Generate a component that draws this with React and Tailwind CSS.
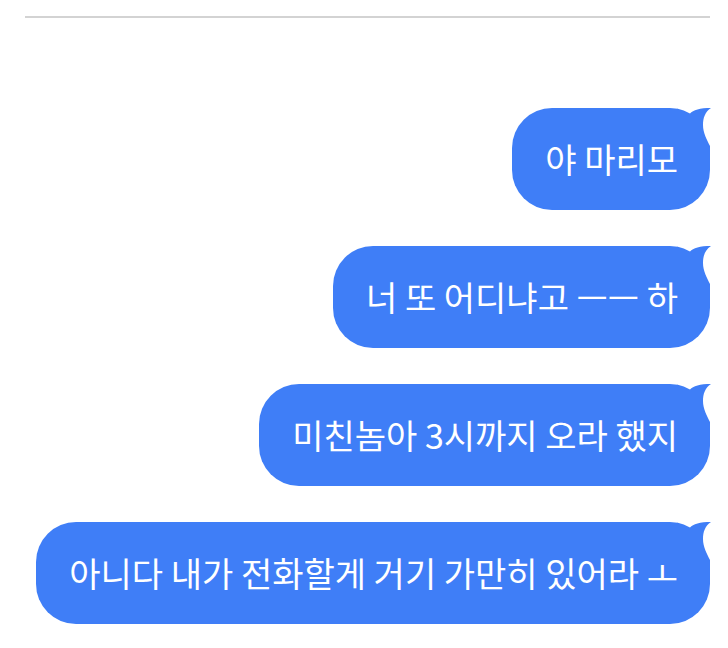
import React from 'react';

const messages = [
  '야 마리모',
  '너 또 어디냐고 ㅡㅡ 하',
  '미친놈아 3시까지 오라 했지',
  '아니다 내가 전화할게 거기 가만히 있어라 ㅗ',
];

// little hooked tail on the top-right corner of a bubble
const Tail = () => (
  <svg
    className="absolute top-0 right-[-1px]"
    width="34"
    height="44"
    viewBox="0 0 34 44"
  >
    <rect width="34" height="44" fill="#fff" />
    <path
      d="M0 0.6 A40 40 0 0 1 13 5.6 C16 2 23 0 34 0 C28 4 26 10 26 17 C26 25 30 32 33 38 L33 44 L0 44 Z"
      fill="#3f7ef7"
    />
  </svg>
);

const Bubble = ({ text }) => (
  <div className="relative rounded-[40px] bg-[#3f7ef7] pl-[33px] pr-[32px] py-[31px] text-[34px] leading-[40px] text-white whitespace-nowrap">
    <Tail />
    <span className="relative">{text}</span>
  </div>
);

export default function App() {
  return (
    <div
      className="min-h-[648px] bg-white"
      style={{ fontFamily: '"Noto Sans CJK KR", "Noto Sans", sans-serif' }}
    >
      <div className="pt-4 pl-[25px] pr-[18px]">
        <div className="h-[2px] bg-[#d3d3d3]" />
        <div className="flex flex-col items-end gap-[36px] pt-[90px]">
          {messages.map((m) => (
            <Bubble key={m} text={m} />
          ))}
        </div>
      </div>
    </div>
  );
}
